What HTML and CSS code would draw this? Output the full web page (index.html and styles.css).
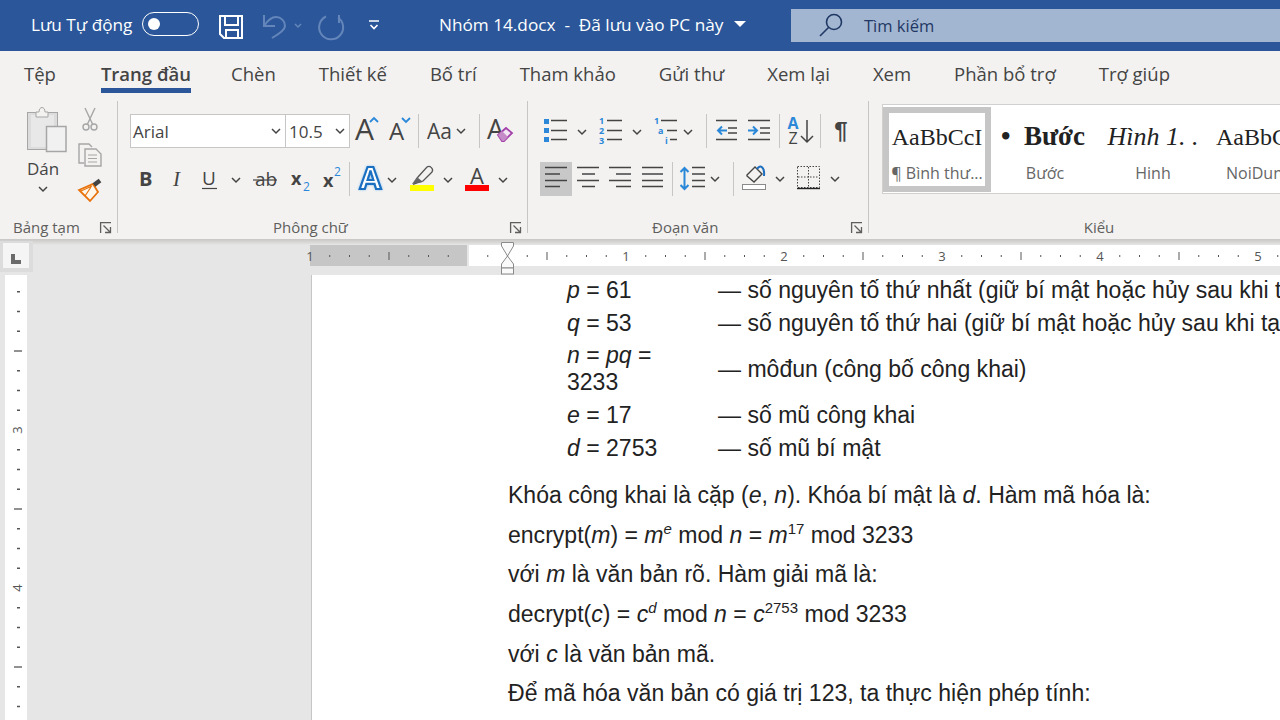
FILE: index.html
```html
<!DOCTYPE html>
<html lang="vi">
<head>
    <meta charset="UTF-8">
    <title>Nhóm 14.docx</title>
    <link rel="stylesheet" href="styles.css">
</head>
<body>

<!-- shared icon parts -->
<svg class="defs" width="0" height="0">
    <defs>
        <path id="chev" d="M-4 -2L0 2L4 -2" fill="none" stroke="#444" stroke-width="1.5"/>
        <g id="launch" fill="none" stroke="#605e5c" stroke-width="1.3">
            <path d="M.6 11V.6H11"/>
            <path d="M3.5 3.5L10.5 10.5M10.5 5V10.5H5"/>
        </g>
    </defs>
</svg>

<!-- Title bar -->
<header class="titlebar">
    <span class="autosave">Lưu Tự động</span>
    <span class="toggle"><span class="toggle-dot"></span></span>
    <svg class="qa" width="44" height="51" viewBox="208 0 44 51" fill="none" stroke="#fff" stroke-width="2">
        <path d="M220 16H242V38H224L220 34Z"/>
        <path d="M225 16V25H238V16M226 38V30H238V38"/>
    </svg>
    <svg class="qa" width="58" height="51" viewBox="252 0 58 51" fill="none" stroke="#6486ba" stroke-width="2">
        <path d="M264 15V26H275"/>
        <path d="M264 26C268 20 272 17 276 17C281 17 285 21 285 26C285 30 279 34 272 38"/>
        <path d="M295 24L298 27L301 24" stroke-width="1.5"/>
    </svg>
    <svg class="qa" width="42" height="51" viewBox="310 0 42 51" fill="none" stroke="#6486ba" stroke-width="2">
        <path d="M326 16.5A12 12 0 1 0 338 17.5"/>
        <path d="M339 15V23"/>
    </svg>
    <svg class="qa" width="44" height="51" viewBox="352 0 44 51" fill="none" stroke="#fff" stroke-width="1.6">
        <path d="M369 21H379M370.5 25L374 28.500L377.500 25"/>
    </svg>
    <span class="doc-title">Nhóm 14.docx&nbsp; - &nbsp;Đã lưu vào PC này</span>
    <svg class="doc-caret" width="12" height="6" viewBox="0 0 12 6"><path d="M0 0H12L6 6Z" fill="#fff"/></svg>
    <div class="search">
        <svg width="28" height="33" viewBox="0 0 28 33" fill="none" stroke="#1f3864" stroke-width="1.6">
            <circle cx="16" cy="13" r="7.500"/>
            <path d="M10.500 18.500L2 27"/>
        </svg>
        <span class="search-text">Tìm kiếm</span>
    </div>
</header>

<!-- Tabs -->
<nav class="tabs">
    <span class="tab">Tệp</span>
    <span class="tab active">Trang đầu</span>
    <span class="tab">Chèn</span>
    <span class="tab">Thiết kế</span>
    <span class="tab">Bố trí</span>
    <span class="tab">Tham khảo</span>
    <span class="tab">Gửi thư</span>
    <span class="tab">Xem lại</span>
    <span class="tab">Xem</span>
    <span class="tab">Phần bổ trợ</span>
    <span class="tab">Trợ giúp</span>
</nav>

<!-- Ribbon -->
<section class="ribbon">

    <div class="group group-clip">
        <div class="clip-body">
            <div class="paste">
                <svg width="70" height="52" viewBox="8 104 70 52">
                    <rect x="27.500" y="112.500" width="30" height="37" fill="#dcdcdc" stroke="#a6a6a6"/>
                    <rect x="31" y="115" width="23" height="32" fill="#e8e8e8"/>
                    <path d="M36 117V112H39C39 106 45 106 45 112H48V117Z" fill="#f3f2f1" stroke="#a6a6a6"/>
                    <rect x="46.500" y="126.500" width="19.500" height="25" fill="#f1f1f1" stroke="#a6a6a6" stroke-width="1.500"/>
                </svg>
                <span class="paste-label">Dán</span>
                <svg width="70" height="16" viewBox="-35 -8 70 16"><use href="#chev"/></svg>
            </div>
            <div class="clip-tools">
                <svg width="24" height="36" viewBox="78 104 24 36" fill="none" stroke="#a6a6a6" stroke-width="1.400">
                    <path d="M85 108L92.500 124M95 108L87.500 124"/>
                    <circle cx="86" cy="127" r="3"/>
                    <circle cx="94" cy="127" r="3"/>
                </svg>
                <svg width="24" height="36" viewBox="78 140 24 36" fill="none" stroke="#a6a6a6" stroke-width="1.400">
                    <path d="M84 163H79V144H89L92 147"/>
                    <path d="M85 149H96L101 154V166H85Z" fill="#f3f2f1"/>
                    <path d="M88 155H97M88 158.500H97M88 162H97" stroke-width="1"/>
                </svg>
                <svg width="24" height="32" viewBox="78 176 24 32">
                    <path d="M79 190L93 184L98 192L90 201Z" fill="#fff6ec" stroke="#e8730c" stroke-width="1.800"/>
                    <path d="M85 196L91 187M81 191L92 186" stroke="#e8730c" stroke-width="1.200"/>
                    <path d="M94 185L100 180.500" stroke="#444" stroke-width="4.500"/>
                </svg>
            </div>
        </div>
        <div class="group-label">
            <span>Bảng tạm</span>
            <svg class="launcher" width="12" height="11" viewBox="0 0 12 11"><use href="#launch"/></svg>
        </div>
    </div>

    <div class="group group-font">
        <div class="tool-row">
            <div class="combo combo-name"><span>Arial</span><svg width="10" height="6" viewBox="-5 -3 10 6"><use href="#chev"/></svg></div>
            <div class="combo combo-size"><span>10.5</span><svg width="10" height="6" viewBox="-5 -3 10 6"><use href="#chev"/></svg></div>
            <svg width="34" height="34" viewBox="350 114 34 34">
                <text class="glyph" x="355" y="140" font-size="30">A</text>
                <path d="M370 122L374 118L378 122" fill="none" stroke="#2b88d8" stroke-width="1.800"/>
            </svg>
            <svg width="34" height="34" viewBox="384 114 34 34">
                <text class="glyph" x="389" y="140" font-size="24">A</text>
                <path d="M402 118L406 122L410 118" fill="none" stroke="#2b88d8" stroke-width="1.800"/>
            </svg>
            <span class="sep"></span>
            <svg width="60" height="34" viewBox="419 114 60 34">
                <text class="glyph" x="427" y="139" font-size="21">Aa</text>
                <use href="#chev" x="461" y="131"/>
            </svg>
            <span class="sep"></span>
            <svg width="40" height="34" viewBox="480 114 40 34">
                <text class="glyph" x="487" y="139" font-size="27">A</text>
                <path d="M498 135L506 128L512 133L504 141H502Z" fill="#f3e6f4" stroke="#a33fa8" stroke-width="1.800"/>
                <path d="M498 135L502 131L508 137L504 141H502Z" fill="#c58ac8"/>
            </svg>
        </div>
        <div class="tool-row">
            <svg width="32" height="34" viewBox="130 162 32 34"><text class="glyph strong" x="139" y="186" font-size="20">B</text></svg>
            <svg width="32" height="34" viewBox="162 162 32 34"><text class="glyph serif-i" x="173" y="186" font-size="21">I</text></svg>
            <svg width="54" height="34" viewBox="194 162 54 34">
                <text class="glyph" x="202" y="185" font-size="19">U</text>
                <path d="M202 188.500H217" stroke="#444" stroke-width="1.200"/>
                <use href="#chev" x="236" y="180"/>
            </svg>
            <svg width="33" height="34" viewBox="248 162 33 34">
                <text class="glyph" x="255" y="186" font-size="19">ab</text>
                <path d="M253 180H277" stroke="#444" stroke-width="1.200"/>
            </svg>
            <svg width="33" height="34" viewBox="281 162 33 34">
                <text class="glyph strong" x="291" y="185" font-size="18">x</text>
                <text class="blue-num" x="303" y="191" font-size="12">2</text>
            </svg>
            <svg width="35" height="34" viewBox="314 162 35 34">
                <text class="glyph strong" x="323" y="187" font-size="18">x</text>
                <text class="blue-num" x="334" y="176" font-size="12">2</text>
            </svg>
            <span class="sep"></span>
            <svg width="52" height="34" viewBox="350 162 52 34">
                <text x="370.500" y="189" font-size="31" text-anchor="middle" class="effect">A</text>
                <use href="#chev" x="392" y="180"/>
            </svg>
            <svg width="56" height="34" viewBox="402 162 56 34">
                <path d="M414 184L418 177L427 167C430 165 434 169 432 172L423 181L417 183Z" fill="#f3f2f1" stroke="#555" stroke-width="1.300"/>
                <path d="M412 184L417 177L423 182Z" fill="#666"/>
                <rect x="410" y="185" width="24" height="6" fill="#ffff00"/>
                <use href="#chev" x="448" y="180"/>
            </svg>
            <svg width="54" height="34" viewBox="458 162 54 34">
                <text class="glyph" x="477" y="184" font-size="22" text-anchor="middle">A</text>
                <rect x="465" y="185" width="24" height="6" fill="#ff0000"/>
                <use href="#chev" x="503" y="180"/>
            </svg>
        </div>
        <div class="group-label">
            <span>Phông chữ</span>
            <svg class="launcher" width="12" height="11" viewBox="0 0 12 11"><use href="#launch"/></svg>
        </div>
    </div>

    <div class="group group-para">
        <div class="tool-row">
            <svg class="lines" width="62" height="34" viewBox="528 114 62 34">
                <path d="M551 120.500H567M551 130.500H567M551 139.500H567"/>
                <path class="fill-blue" d="M544 119h5v5h-5zM544 128h5v5h-5zM544 137h5v5h-5z"/>
                <use href="#chev" x="582" y="132"/>
            </svg>
            <svg class="lines" width="56" height="34" viewBox="590 114 56 34">
                <path d="M607 120.500H622M607 130.500H622M607 139.500H622"/>
                <text class="mini" x="599" y="124">1</text>
                <text class="mini" x="599" y="134">2</text>
                <text class="mini" x="599" y="144">3</text>
                <use href="#chev" x="637" y="132"/>
            </svg>
            <svg class="lines" width="60" height="34" viewBox="646 114 60 34">
                <path d="M661 120.500H677M667 130.500H677M670 139.500H677"/>
                <text class="mini" x="654" y="124">1</text>
                <text class="mini" x="658" y="134">a</text>
                <text class="mini" x="665" y="144">i</text>
                <use href="#chev" x="688" y="132"/>
            </svg>
            <span class="sep"></span>
            <svg class="lines" width="36" height="34" viewBox="707 114 36 34">
                <path d="M716 120.500H737M728 128H737M728 133H737M716 139.500H737"/>
                <path class="arrow-blue" d="M727 130.500H718M722 126.500L718 130.500L722 134.500"/>
            </svg>
            <svg class="lines" width="36" height="34" viewBox="743 114 36 34">
                <path d="M748 120.500H770M760 128H770M760 133H770M748 139.500H770"/>
                <path class="arrow-blue" d="M748 130.500H757M753 126.500L757 130.500L753 134.500"/>
            </svg>
            <span class="sep"></span>
            <svg width="40" height="34" viewBox="780 114 40 34">
                <text class="sort-a" x="793" y="129" font-size="16" text-anchor="middle">A</text>
                <text class="glyph" x="793" y="144" font-size="16" text-anchor="middle">Z</text>
                <path d="M807 120V142M801 136L807 142L813 136" fill="none" stroke="#444" stroke-width="1.500"/>
            </svg>
            <span class="sep"></span>
            <svg width="39" height="34" viewBox="821 114 39 34">
                <text class="glyph strong-para" x="841" y="139" font-size="24" text-anchor="middle">¶</text>
            </svg>
        </div>
        <div class="tool-row para-row">
            <svg class="lines align-on" width="32" height="34" viewBox="540 163 32 34">
                <path d="M545 168.500H567M545 175H560M545 181.500H567M545 187.500H560"/>
            </svg>
            <svg class="lines" width="32" height="34" viewBox="572 163 32 34">
                <path d="M577 168.500H599M582 175H595M577 181.500H599M582 187.500H595"/>
            </svg>
            <svg class="lines" width="32" height="34" viewBox="604 163 32 34">
                <path d="M609 168.500H631M616 175H631M609 181.500H631M616 187.500H631"/>
            </svg>
            <svg class="lines" width="36" height="34" viewBox="636 163 36 34">
                <path d="M642 168.500H663M642 175H663M642 181.500H663M642 187.500H663"/>
            </svg>
            <span class="sep"></span>
            <svg class="lines" width="60" height="34" viewBox="673 163 60 34">
                <path d="M692 168.500H705M692 175H705M692 181.500H705M692 187.500H705"/>
                <path class="arrow-blue" d="M684.500 169V190M680.500 173L684.500 169L688.500 173M680.500 186L684.500 190L688.500 186"/>
                <use href="#chev" x="715" y="180"/>
            </svg>
            <span class="sep"></span>
            <svg width="56" height="34" viewBox="734 163 56 34">
                <path d="M747 176L755 168L762 175L754 183L747 177Z" fill="#f3f2f1" stroke="#444" stroke-width="1.400"/>
                <path d="M757 170C760 165 765 168 764 177" fill="none" stroke="#1e6fbf" stroke-width="2"/>
                <rect x="742.500" y="185.500" width="23" height="5" fill="#fff" stroke="#8a8a8a"/>
                <use href="#chev" x="780" y="180"/>
            </svg>
            <svg width="55" height="34" viewBox="790 163 55 34">
                <rect x="797.500" y="167.500" width="22" height="21" fill="none" stroke="#444" stroke-dasharray="1.500 1.500"/>
                <path d="M808.500 168V188M798 178H819" stroke="#444" stroke-dasharray="1.500 1.500"/>
                <path d="M797 189.500H820" stroke="#222" stroke-width="1.400"/>
                <use href="#chev" x="835" y="180"/>
            </svg>
        </div>
        <div class="group-label">
            <span>Đoạn văn</span>
            <svg class="launcher" width="12" height="11" viewBox="0 0 12 11"><use href="#launch"/></svg>
        </div>
    </div>

    <div class="group group-styles">
        <div class="gallery">
            <div class="style-item selected">
                <span class="style-sample">AaBbCcI</span>
                <span class="style-name">¶ Bình thư...</span>
            </div>
            <div class="style-item">
                <span class="style-sample bold">•&nbsp;&nbsp;Bước</span>
                <span class="style-name">Bước</span>
            </div>
            <div class="style-item">
                <span class="style-sample ital">Hình 1. .</span>
                <span class="style-name">Hinh</span>
            </div>
            <div class="style-item">
                <span class="style-sample">AaBbCcI</span>
                <span class="style-name">NoiDung</span>
            </div>
        </div>
        <div class="group-label styles-label">Kiểu</div>
    </div>
</section>

<!-- Horizontal ruler -->
<div class="ruler-band">
    <div class="corner">
        <div class="corner-inner">
            <svg width="10" height="10" viewBox="0 0 10 10"><path d="M0 0H4V6H10V10H0Z" fill="#6b6b6b"/></svg>
        </div>
    </div>
    <svg class="h-ruler" width="970" height="21" viewBox="310 245 970 21">
        <defs>
            <pattern id="hticks" x="468" y="245" width="158" height="21" patternUnits="userSpaceOnUse">
                <path d="M19.750 10v2M39.500 10v2M59.250 10v2M98.750 10v2M118.500 10v2M138.250 10v2" stroke="#555" stroke-width="1"/>
                <path d="M79 7v8" stroke="#555" stroke-width="1"/>
            </pattern>
        </defs>
        <rect x="310" y="245" width="157" height="21" fill="#c6c6c6"/>
        <rect x="469" y="245" width="811" height="21" fill="#fff"/>
        <rect x="310" y="245" width="970" height="21" fill="url(#hticks)"/>
        <g class="ruler-num">
            <text x="310" y="261">1</text>
            <text x="626" y="261">1</text>
            <text x="784" y="261">2</text>
            <text x="942" y="261">3</text>
            <text x="1100" y="261">4</text>
            <text x="1258" y="261">5</text>
        </g>
        <g fill="#fafafa" stroke="#8a8a8a">
            <path d="M501.500 242.500H513.500V246L507.500 256L501.500 246Z"/>
            <path d="M507.500 256L513.500 264V268H501.500V264Z"/>
            <rect x="501.500" y="268" width="12" height="6"/>
        </g>
    </svg>
</div>

<!-- Document area -->
<main class="workspace">
    <div class="margin-area">
        <svg class="v-ruler" width="22" height="445" viewBox="5 275 22 445">
            <defs>
                <pattern id="vticks" x="5" y="272" width="22" height="158" patternUnits="userSpaceOnUse">
                    <path d="M12 19.750h3M12 39.500h3M12 59.250h3M12 98.750h3M12 118.500h3M12 138.250h3" stroke="#555" stroke-width="1.300"/>
                    <path d="M9 79h8" stroke="#555" stroke-width="1.300"/>
                </pattern>
            </defs>
            <rect x="5" y="275" width="22" height="445" fill="#fff"/>
            <rect x="5" y="275" width="22" height="445" fill="url(#vticks)"/>
            <text class="ruler-num" transform="translate(22 430) rotate(-90)" x="0" y="0">3</text>
            <text class="ruler-num" transform="translate(22 588) rotate(-90)" x="0" y="0">4</text>
        </svg>
    </div>
    <article class="page">
        <table class="keys">
            <tr><td><i>p</i> = 61</td><td>— số nguyên tố thứ nhất (giữ bí mật hoặc hủy sau khi tạo khóa)</td></tr>
            <tr><td><i>q</i> = 53</td><td>— số nguyên tố thứ hai (giữ bí mật hoặc hủy sau khi tạo khóa)</td></tr>
            <tr><td class="wrap"><i>n</i> = <i>pq</i> = 3233</td><td>— môđun (công bố công khai)</td></tr>
            <tr><td><i>e</i> = 17</td><td>— số mũ công khai</td></tr>
            <tr><td><i>d</i> = 2753</td><td>— số mũ bí mật</td></tr>
        </table>
        <p>Khóa công khai là cặp (<i>e</i>, <i>n</i>). Khóa bí mật là <i>d</i>. Hàm mã hóa là:</p>
        <p>encrypt(<i>m</i>) = <i>m<sup>e</sup></i> mod <i>n</i> = <i>m</i><sup>17</sup> mod 3233</p>
        <p>với <i>m</i> là văn bản rõ. Hàm giải mã là:</p>
        <p>decrypt(<i>c</i>) = <i>c<sup>d</sup></i> mod <i>n</i> = <i>c</i><sup>2753</sup> mod 3233</p>
        <p>với <i>c</i> là văn bản mã.</p>
        <p>Để mã hóa văn bản có giá trị 123, ta thực hiện phép tính:</p>
    </article>
</main>

</body>
</html>
```

FILE: styles.css
```css
* {
    box-sizing: border-box;
}

body {
    margin: 0;
    width: 1280px;
    height: 720px;
    overflow: hidden;
    display: flex;
    flex-direction: column;
    background-color: #e6e6e6;
    font-family: "Open Sans", "Noto Sans", sans-serif;
    color: #444;
}

svg {
    display: block;
    flex: none;
    overflow: visible;
}

.defs {
    position: absolute;
}

/* title bar */
.titlebar {
    height: 51px;
    flex: none;
    display: flex;
    align-items: center;
    padding-left: 31px;
    background-color: #2b579a;
    color: #fff;
    font-size: 17.200px;
}

.autosave {
    width: 111px;
    margin-bottom: 3px;
    white-space: nowrap;
}

.toggle {
    width: 57px;
    height: 24px;
    display: flex;
    align-items: center;
    padding-left: 5px;
    border: 1.500px solid #fff;
    border-radius: 12px;
    margin: 0 9px 3px 0;
}

.toggle-dot {
    width: 12px;
    height: 12px;
    border-radius: 50%;
    background-color: #fff;
}

.doc-title {
    margin: 0 0 3px 43px;
    width: 295px;
    white-space: nowrap;
}

.doc-caret {
    margin-bottom: 3px;
}

.search {
    margin: 0 0 0 auto;
    width: 489px;
    height: 33px;
    display: flex;
    align-items: center;
    padding-left: 27px;
    background-color: #a3b6d1;
    color: #1f3864;
}

.search-text {
    margin: 0 0 1px 18px;
    font-size: 16.500px;
}

/* tabs */
.tabs {
    height: 42px;
    flex: none;
    display: flex;
    gap: 43px;
    padding-left: 24px;
    background-color: #f3f2f1;
    font-size: 18.500px;
}

.tab {
    height: 42px;
    padding-top: 9px;
    line-height: 28px;
    border-bottom: 5px solid transparent;
    white-space: nowrap;
}

.tab.active {
    margin: 0 -3px 0 2px;
    font-weight: 600;
    border-bottom-color: #2b579a;
}

/* ribbon */
.ribbon {
    height: 146px;
    flex: none;
    display: flex;
    padding-top: 8px;
    background-color: #f3f2f1;
}

.group {
    height: 132px;
    display: flex;
    flex-direction: column;
    border-right: 1px solid #c8c6c4;
}

.group-clip {
    width: 118px;
}

.group-font {
    width: 410px;
    padding: 13px 5px 0 12px;
}

.group-para {
    width: 341px;
    padding: 13px 5px 0 0;
}

.group-styles {
    flex: 1;
    border-right: none;
    padding: 3px 0 0 13px;
    min-width: 0;
}

.group-label {
    margin-top: auto;
    height: 11px;
    line-height: 11px;
    display: flex;
    justify-content: space-between;
    font-size: 15px;
    color: #605e5c;
    white-space: nowrap;
}

.group-clip .group-label {
    padding: 0 5px 0 13px;
}

.group-font .group-label {
    padding-left: 143px;
}

.group-para .group-label {
    padding-left: 124px;
}

.styles-label {
    display: block;
    text-align: center;
    width: 434px;
}

.clip-body {
    display: flex;
    padding: 3px 0 0 8px;
}

.paste {
    width: 70px;
}

.paste-label {
    display: block;
    height: 24px;
    margin-top: 1px;
    line-height: 24px;
    text-align: center;
    font-size: 17px;
}

.tool-row {
    height: 34px;
    display: flex;
    margin-bottom: 14px;
}

.para-row {
    margin-top: -1px;
    margin-bottom: 0;
    padding-left: 12px;
}

.group-para .tool-row:first-child {
    margin-bottom: 15px;
}

.sep {
    width: 1px;
    height: 34px;
    flex: none;
    background-color: #c8c6c4;
}

.combo {
    height: 34px;
    display: flex;
    align-items: center;
    justify-content: space-between;
    padding: 0 4px 0 2px;
    background-color: #fff;
    border: 1px solid #c8c6c4;
    font-size: 17px;
}

.combo-name {
    width: 156px;
}

.combo-size {
    width: 64px;
    padding-left: 3px;
    border-left: none;
}

/* icons */
.glyph {
    font-family: "Open Sans", sans-serif;
    fill: #444;
}

.strong {
    font-weight: 700;
}

.strong-para {
    font-family: "Liberation Sans", sans-serif;
    font-weight: 700;
}

.serif-i {
    font-family: "Liberation Serif", serif;
    font-style: italic;
}

.blue-num {
    font-family: "Open Sans", sans-serif;
    fill: #2b88d8;
}

.effect {
    font-family: "Open Sans", sans-serif;
    font-weight: 700;
    fill: #fff;
    stroke: #1a6fc0;
    stroke-width: 2.200;
    filter: drop-shadow(0 0 1px #8fc1ec);
}

.sort-a {
    font-family: "Open Sans", sans-serif;
    font-weight: 700;
    fill: #2b88d8;
}

.lines {
    fill: none;
    stroke: #444;
    stroke-width: 1.500;
}

.fill-blue {
    fill: #2b88d8;
    stroke: none;
}

.arrow-blue {
    stroke: #2b88d8;
    stroke-width: 2;
}

.mini {
    font-family: "Open Sans", sans-serif;
    font-size: 9px;
    font-weight: 700;
    fill: #2b88d8;
    stroke: none;
}

.align-on {
    background-color: #c8c8c8;
}

/* styles gallery */
.gallery {
    height: 90px;
    display: flex;
    overflow: hidden;
    padding-top: 2px;
    background-color: #fff;
    border: 1px solid #d2d0ce;
    border-right: none;
}

.style-item {
    width: 108px;
    height: 85px;
    flex: none;
    display: flex;
    flex-direction: column;
    align-items: center;
    border: 6px solid transparent;
    white-space: nowrap;
}

.style-item.selected {
    border-color: #c6c6c6;
}

.style-sample {
    height: 49px;
    padding-top: 6px;
    line-height: 36px;
    font-family: "Liberation Serif", serif;
    font-size: 24px;
    color: #222;
}

.style-sample.bold {
    margin-right: 4px;
    font-weight: 700;
    font-size: 27px;
    line-height: 34px;
}

.style-sample.ital {
    font-style: italic;
    font-size: 26px;
}

.style-item:last-child {
    align-items: flex-start;
}

.style-item:last-child .style-sample {
    margin-left: 3px;
}

.style-item:last-child .style-name {
    margin-left: 13px;
}

.style-name {
    line-height: 22px;
    font-size: 16px;
    color: #666;
}

/* ruler band */
.ruler-band {
    height: 36px;
    flex: none;
    display: flex;
    align-items: flex-start;
    background: linear-gradient(#c8c6c4, #e6e6e6 6px);
}

.corner {
    width: 33px;
    height: 31px;
    margin-top: 2px;
    padding: 2px 3px;
    background-color: #dcdcdc;
}

.corner-inner {
    width: 26px;
    height: 25px;
    display: flex;
    align-items: flex-end;
    padding: 0 0 4px 8px;
    background-color: #f5f5f5;
}

.h-ruler {
    margin: 6px 0 0 277px;
}

.ruler-num {
    font-family: "Open Sans", sans-serif;
    font-size: 13px;
    fill: #555;
    text-anchor: middle;
}

/* document */
.workspace {
    flex: 1;
    min-height: 0;
    display: flex;
}

.margin-area {
    width: 311px;
    flex: none;
    padding-left: 5px;
}

.page {
    flex: 1;
    min-width: 0;
    overflow: hidden;
    padding-left: 196px;
    background-color: #fff;
    border-left: 1px solid #c6c6c6;
    font-family: "Liberation Sans", sans-serif;
    font-size: 23.040px;
    line-height: 27px;
    color: #222;
}

.keys {
    width: 1000px;
    margin: -1px 0 17px 59px;
    table-layout: fixed;
    border-collapse: collapse;
    white-space: nowrap;
}

.keys td {
    padding: 3px 0;
}

.keys td:first-child {
    width: 151px;
}

.keys td.wrap {
    white-space: normal;
    padding: 2px 40px 3px 0;
}

.page p {
    margin: 0 0 12.700px;
    white-space: nowrap;
}

.page sup {
    font-size: 15px;
    line-height: 0;
}
```
